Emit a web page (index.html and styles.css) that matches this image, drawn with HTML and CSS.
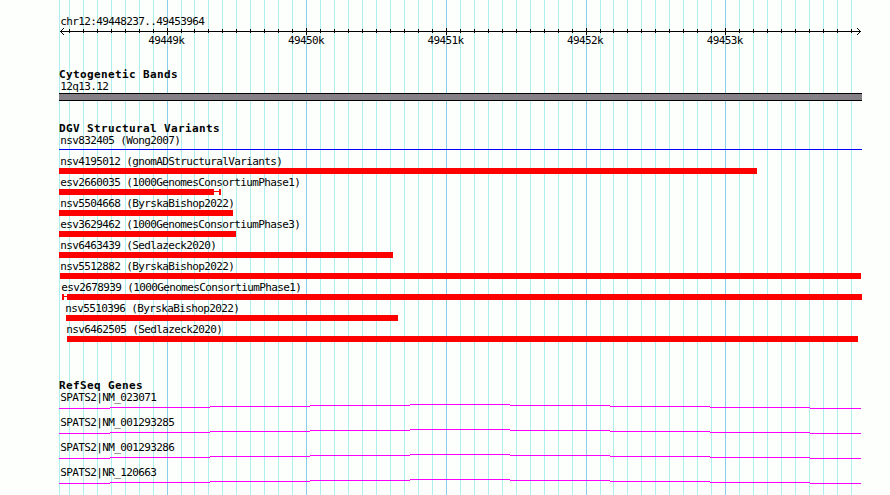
FILE: index.html
```
<!DOCTYPE html>
<html lang="en">
<head>
    <meta charset="UTF-8">
    <meta name="viewport" content="width=device-width, initial-scale=1.0">
    <title>chr12:49448237..49453964</title>
    <link rel="stylesheet" href="styles.css">
</head>
<body>
    <div class="browser">
        <svg class="grid" width="890" height="495" shape-rendering="crispEdges">
            <path class="grid-minor" d="M59.5 0v495M69.5 0v495M83.5 0v495M97.5 0v495M111.5 0v495M125.5 0v495M139.5 0v495M153.5 0v495M181.5 0v495M194.5 0v495M208.5 0v495M222.5 0v495M236.5 0v495M250.5 0v495M264.5 0v495M278.5 0v495M292.5 0v495M320.5 0v495M334.5 0v495M348.5 0v495M362.5 0v495M376.5 0v495M390.5 0v495M404.5 0v495M418.5 0v495M432.5 0v495M460.5 0v495M474.5 0v495M488.5 0v495M502.5 0v495M516.5 0v495M530.5 0v495M544.5 0v495M558.5 0v495M572.5 0v495M600.5 0v495M613.5 0v495M627.5 0v495M641.5 0v495M655.5 0v495M669.5 0v495M683.5 0v495M697.5 0v495M711.5 0v495M739.5 0v495M753.5 0v495M767.5 0v495M781.5 0v495M795.5 0v495M809.5 0v495M823.5 0v495M837.5 0v495M851.5 0v495"/>
            <path class="grid-major" d="M167.5 0v495M306.5 0v495M446.5 0v495M586.5 0v495M725.5 0v495"/>
        </svg>

        <div class="tracks">
            <div class="ruler">
                <div class="label">chr12:49448237..49453964</div>
                <svg class="ruler-axis" viewBox="59 0 803 7" width="803" height="7" shape-rendering="crispEdges">
                    <path d="M60 3.5H861"/>
                    <path d="M69.5 1v4M83.5 1v4M97.5 1v4M111.5 1v4M125.5 1v4M139.5 1v4M153.5 1v4M181.5 1v4M194.5 1v4M208.5 1v4M222.5 1v4M236.5 1v4M250.5 1v4M264.5 1v4M278.5 1v4M292.5 1v4M320.5 1v4M334.5 1v4M348.5 1v4M362.5 1v4M376.5 1v4M390.5 1v4M404.5 1v4M418.5 1v4M432.5 1v4M460.5 1v4M474.5 1v4M488.5 1v4M502.5 1v4M516.5 1v4M530.5 1v4M544.5 1v4M558.5 1v4M572.5 1v4M600.5 1v4M613.5 1v4M627.5 1v4M641.5 1v4M655.5 1v4M669.5 1v4M683.5 1v4M697.5 1v4M711.5 1v4M739.5 1v4M753.5 1v4M767.5 1v4M781.5 1v4M795.5 1v4M809.5 1v4M823.5 1v4M837.5 1v4M851.5 1v4"/>
                    <path d="M167.5 0v7M306.5 0v7M446.5 0v7M586.5 0v7M725.5 0v7"/>
                    <path d="M63 .5h1M62 1.5h1M61 2.5h1M61 4.5h1M62 5.5h1M63 6.5h1M857 .5h1M858 1.5h1M859 2.5h1M859 4.5h1M858 5.5h1M857 6.5h1"/>
                </svg>
                <div class="ruler-labels">
                    <span>49449k</span>
                    <span>49450k</span>
                    <span>49451k</span>
                    <span>49452k</span>
                    <span>49453k</span>
                </div>
            </div>

            <div class="track cytobands">
                <h2 class="track-title">Cytogenetic Bands</h2>
                <div class="label">12q13.12</div>
                <div class="band"></div>
            </div>

            <div class="track variants">
                <h2 class="track-title">DGV Structural Variants</h2>
                <div class="feature feature-line">
                    <div class="label">nsv832405 (Wong2007)</div>
                    <div class="line"></div>
                </div>
                <div class="feature">
                    <div class="label">nsv4195012 (gnomADStructuralVariants)</div>
                    <div class="bar" style="width: 698px"></div>
                </div>
                <div class="feature">
                    <div class="label">esv2660035 (1000GenomesConsortiumPhase1)</div>
                    <div class="span">
                        <div class="bar" style="width: 155px"></div>
                        <div class="whisker" style="width: 5px"></div>
                        <div class="cap"></div>
                    </div>
                </div>
                <div class="feature">
                    <div class="label">nsv5504668 (ByrskaBishop2022)</div>
                    <div class="bar" style="width: 174px"></div>
                </div>
                <div class="feature">
                    <div class="label">esv3629462 (1000GenomesConsortiumPhase3)</div>
                    <div class="bar" style="width: 177px"></div>
                </div>
                <div class="feature">
                    <div class="label">nsv6463439 (Sedlazeck2020)</div>
                    <div class="bar" style="width: 334px"></div>
                </div>
                <div class="feature">
                    <div class="label">nsv5512882 (ByrskaBishop2022)</div>
                    <div class="bar" style="margin-left: 1px; width: 801px"></div>
                </div>
                <div class="feature">
                    <div class="label" style="margin-left: 1px">esv2678939 (1000GenomesConsortiumPhase1)</div>
                    <div class="span" style="margin-left: 3px">
                        <div class="cap"></div>
                        <div class="whisker" style="width: 3px"></div>
                        <div class="bar" style="width: 795px"></div>
                    </div>
                </div>
                <div class="feature">
                    <div class="label" style="margin-left: 5px">nsv5510396 (ByrskaBishop2022)</div>
                    <div class="bar" style="margin-left: 7px; width: 332px"></div>
                </div>
                <div class="feature">
                    <div class="label" style="margin-left: 6px">nsv6462505 (Sedlazeck2020)</div>
                    <div class="bar" style="margin-left: 8px; width: 791px"></div>
                </div>
            </div>

            <div class="track genes">
                <h2 class="track-title">RefSeq Genes</h2>
                <div class="gene">
                    <div class="label">SPATS2|NM_023071</div>
                    <svg class="intron" viewBox="59 0 803 5" width="803" height="5" shape-rendering="crispEdges">
                        <path id="intron" d="M59 4.5h51M110 3.5h100M210 2.5h100M310 1.5h100M410 .5h100M510 1.5h100M610 2.5h100M710 3.5h100M810 4.5h51"/>
                    </svg>
                </div>
                <div class="gene">
                    <div class="label">SPATS2|NM_001293285</div>
                    <svg class="intron" viewBox="59 0 803 5" width="803" height="5" shape-rendering="crispEdges"><use href="#intron"/></svg>
                </div>
                <div class="gene">
                    <div class="label">SPATS2|NM_001293286</div>
                    <svg class="intron" viewBox="59 0 803 5" width="803" height="5" shape-rendering="crispEdges"><use href="#intron"/></svg>
                </div>
                <div class="gene">
                    <div class="label">SPATS2|NR_120663</div>
                    <svg class="intron" viewBox="59 0 803 5" width="803" height="5" shape-rendering="crispEdges"><use href="#intron"/></svg>
                </div>
            </div>
        </div>
    </div>
</body>
</html>
```

FILE: styles.css
```
:root {
    --background: #fdfffc;
    --grid-minor: #afeeee;
    --grid-major: #87ceeb;
    --variant: #ff0000;
    --intron: #ff00ff;
}

body {
    margin: 0;
    background: var(--background);
    color: #000;
    font-family: 'DejaVu Sans Mono', 'Liberation Mono', monospace;
}

.browser {
    position: relative;
    width: 890px;
    height: 495px;
    overflow: hidden;
}

/* guide lines behind every track */
.grid {
    position: absolute;
    top: 0;
    left: 0;
}

.grid-minor {
    stroke: var(--grid-minor);
}

.grid-major {
    stroke: var(--grid-major);
}

.tracks {
    position: relative;
    display: flex;
    flex-direction: column;
    width: 803px;
    padding: 15px 0 0 59px;
}

.label,
.ruler-labels {
    height: 13px;
    font-size: 11px;
    line-height: 13px;
    letter-spacing: -0.622px;
    white-space: nowrap;
}

.label {
    padding-left: 1.2px;
}

/* ruler */
.ruler-axis {
    display: block;
    stroke: #000;
}

.ruler-labels {
    display: flex;
    margin-top: -1px;
    padding-left: 89.3px;
}

.ruler-labels span {
    flex: 0 0 139.6px;
}

/* tracks */
.track-title {
    height: 11px;
    margin: 0;
    font-size: 11px;
    line-height: 12px;
    letter-spacing: 0.378px;
    white-space: nowrap;
}

.cytobands {
    margin-top: 22px;
}

.band {
    box-sizing: border-box;
    height: 8px;
    background: #858085;
    border-top: 1px solid #000;
    border-bottom: 1px solid #000;
}

.variants {
    display: flex;
    flex-direction: column;
    gap: 2px;
    margin-top: 22px;
}

.feature-line {
    margin-top: -2px;
    margin-bottom: 3px;
}

.line {
    height: 1px;
    margin-top: 2px;
    background: #0000ff;
}

.bar {
    height: 6px;
    background: var(--variant);
}

.span {
    display: flex;
}

.whisker {
    height: 1px;
    margin-top: 2px;
    background: var(--variant);
}

.cap {
    width: 2px;
    height: 6px;
    background: var(--variant);
}

.genes {
    margin-top: 38px;
}

.gene {
    height: 25px;
}

.intron {
    display: block;
    stroke: var(--intron);
}
```
